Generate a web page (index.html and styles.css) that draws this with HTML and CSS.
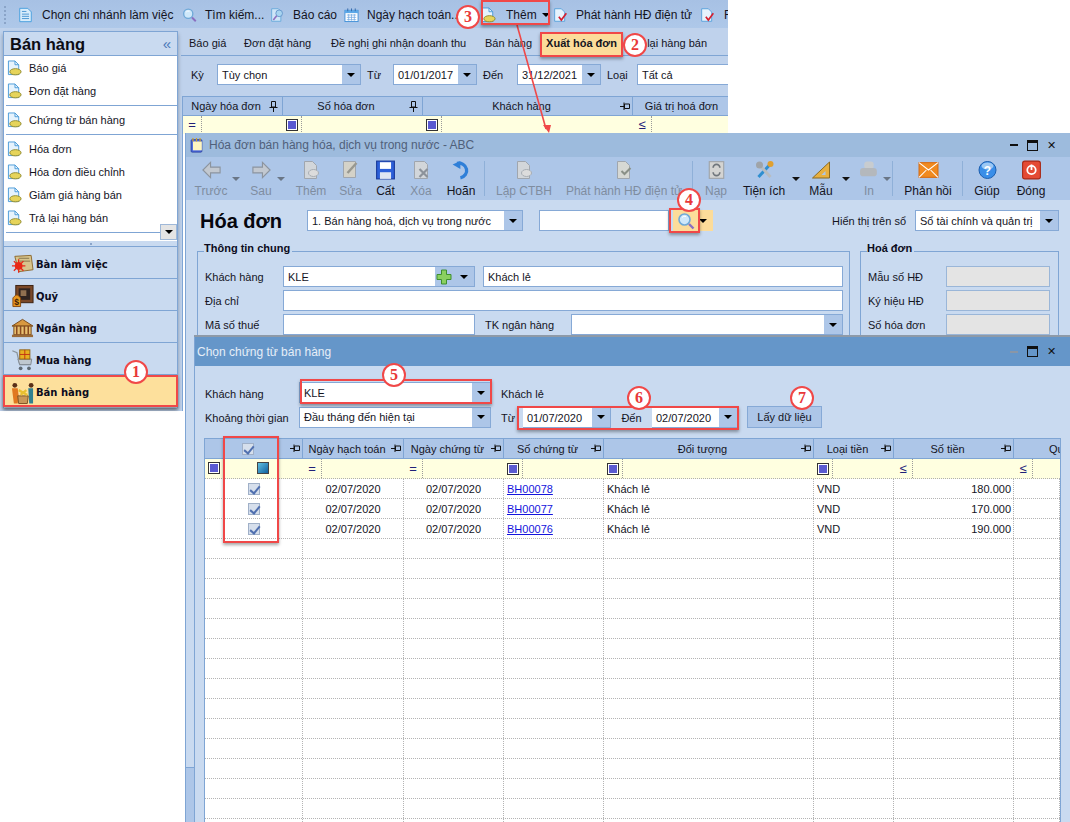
FILE: index.html
```html
<!DOCTYPE html>
<html lang="vi">
<head>
<meta charset="utf-8">
<title>Chọn chứng từ bán hàng</title>
<link rel="stylesheet" href="styles.css">
</head>
<body>
<svg class="defs" width="0" height="0" aria-hidden="true">
  <symbol id="i-list" viewBox="0 0 16 18"><path d="M1.5 1.5h9l4 4v11h-13z" fill="#d8ecfb" stroke="#3f9bdc"/><path d="M4 5h5M4 8h8M4 10.500h8M4 13h8" stroke="#3f8fd0"/></symbol>
  <symbol id="i-search" viewBox="0 0 18 18"><circle cx="7.500" cy="7.500" r="5.500" fill="#cfe8fa" stroke="#6fa9d8" stroke-width="1.600"/><path d="M5 5.500a3.500 3.500 0 0 1 4-1" stroke="#fff" fill="none"/><path d="M12 12l4.500 4.500" stroke="#8a6fc0" stroke-width="2.400"/></symbol>
  <symbol id="i-report" viewBox="0 0 18 18"><path d="M2 1.500h8l3 3v12H2z" fill="#cfe6f8" stroke="#5fa5d8"/><circle cx="11" cy="7" r="4" fill="#a8d4f0" stroke="#5f90c8"/><path d="M8 10l-4 5" stroke="#9070c0" stroke-width="2"/></symbol>
  <symbol id="i-cal" viewBox="0 0 16 16"><rect x="1" y="3" width="14" height="12" fill="#fff" stroke="#3f8fd8"/><rect x="1" y="3" width="14" height="3" fill="#5aa8e8"/><path d="M4 1v3M8 1v3M12 1v3" stroke="#3468a8"/><path d="M3 8h10M3 10.500h10M3 13h10M5 7v7M8 7v7M11 7v7" stroke="#70a8e0" stroke-width=".8"/></symbol>
  <symbol id="i-doc" viewBox="0 0 16 17"><path d="M1.500 1h7l4 4v10.500h-11z" fill="#e6f3fd" stroke="#4a9ad8"/><path d="M8.500 1v4h4" fill="none" stroke="#4a9ad8"/><ellipse cx="9" cy="12.500" rx="6" ry="3.300" fill="#e6d45a" stroke="#8f8a30"/></symbol>
  <symbol id="i-check" viewBox="0 0 18 18"><path d="M2 1.500h8l4 4v11H2z" fill="#e6f3fd" stroke="#4a9ad8"/><path d="M7 11l3 4 6-8" fill="none" stroke="#d42030" stroke-width="2"/></symbol>
  <symbol id="i-left" viewBox="0 0 22 20"><path d="M10 2L2 10l8 8v-5h10V7H10z" fill="#c2c8d0" stroke="#8c949e" stroke-width="1.200"/></symbol>
  <symbol id="i-right" viewBox="0 0 22 20"><path d="M12 2l8 8-8 8v-5H2V7h10z" fill="#c2c8d0" stroke="#8c949e" stroke-width="1.200"/></symbol>
  <symbol id="i-gdoc" viewBox="0 0 18 20"><path d="M2 1.500h8l4 4v13H2z" fill="#d2d6da" stroke="#a0a6ae"/><ellipse cx="11" cy="13" rx="5" ry="3.500" fill="#dcdcdc" stroke="#a8aeb4"/></symbol>
  <symbol id="i-gedit" viewBox="0 0 18 20"><path d="M2 1.500h12v16H2z" fill="#d4d2c8" stroke="#a0a6ae"/><path d="M6 13l9-10" stroke="#989890" stroke-width="2.400"/></symbol>
  <symbol id="i-gdel" viewBox="0 0 18 20"><path d="M2 1.500h10l3 3v14H2z" fill="#d2d6da" stroke="#a0a6ae"/><path d="M7 9l8 8M15 9l-8 8" stroke="#8c929a" stroke-width="2.200"/></symbol>
  <symbol id="i-save" viewBox="0 0 18 18"><rect x="1" y="1" width="16" height="16" fill="#2c5fd8" stroke="#1a3a9a"/><rect x="4" y="2" width="10" height="6" fill="#fff"/><rect x="4" y="11" width="10" height="6" fill="#dfe6f2"/></symbol>
  <symbol id="i-undo" viewBox="0 0 18 18"><path d="M5 3a7 6.500 0 1 1 3 13" fill="none" stroke="#2f7fd8" stroke-width="3"/><path d="M1 4l7-3v7z" fill="#2f7fd8"/></symbol>
  <symbol id="i-gchk" viewBox="0 0 18 20"><path d="M2 1.500h8l4 4v13H2z" fill="#d6d8d4" stroke="#a0a6ae"/><path d="M6 11l3 3 6-6" fill="none" stroke="#8a9088" stroke-width="2"/></symbol>
  <symbol id="i-ref" viewBox="0 0 16 18"><rect x="1.500" y="1.500" width="13" height="15" fill="#d4d4d2" stroke="#a0a4a8"/><path d="M5 7a3 3 0 0 1 6 0M11 11a3 3 0 0 1-6 0" fill="none" stroke="#70767c" stroke-width="1.500"/></symbol>
  <symbol id="i-tools" viewBox="0 0 20 20"><path d="M4 17L15 5" stroke="#2f8fd0" stroke-width="3"/><path d="M4 4l12 13" stroke="#b8bcc0" stroke-width="3"/><circle cx="5" cy="5" r="3.500" fill="#a0a4a8"/><circle cx="16" cy="4" r="3" fill="#e0a030"/></symbol>
  <symbol id="i-ruler" viewBox="0 0 20 20"><path d="M1 18L18 2v16z" fill="#e8b040" stroke="#8a6a20"/><path d="M10 15l4-4v4z" fill="#adc6e8"/></symbol>
  <symbol id="i-print" viewBox="0 0 20 18"><rect x="5" y="1" width="9" height="7" rx="3" fill="#c8cccf"/><rect x="1" y="7" width="16" height="8" rx="3" fill="#b4b8bc"/></symbol>
  <symbol id="i-mail" viewBox="0 0 20 16"><rect x="1" y="1" width="18" height="14" fill="#f08a20" stroke="#d86a10"/><path d="M1 1l9 7 9-7M1 15l7-7M19 15l-7-7" fill="none" stroke="#fff"/></symbol>
  <symbol id="i-help" viewBox="0 0 20 20"><circle cx="10" cy="10" r="8.500" fill="#3a8ee8" stroke="#1c5fb0"/><ellipse cx="10" cy="6" rx="6" ry="3.500" fill="#9cc8f4"/><text x="10" y="15" text-anchor="middle" class="qmark">?</text></symbol>
  <symbol id="i-power" viewBox="0 0 18 18"><rect x="1" y="1" width="16" height="16" rx="2" fill="#e44a34" stroke="#a82a18"/><circle cx="9" cy="9" r="3.800" fill="none" stroke="#fff" stroke-width="1.600"/><path d="M9 4v5" stroke="#fff" stroke-width="1.600"/></symbol>
  <symbol id="i-note" viewBox="0 0 16 18"><rect x="2" y="3" width="12" height="14" rx="1" fill="#4a6ae0" stroke="#2a3ea0"/><rect x="4" y="5" width="10" height="10" fill="#fff6c0"/><path d="M4 1v4M8 1v4M12 1v4" stroke="#c8a030" stroke-width="1.400"/></symbol>
  <symbol id="i-pinv" viewBox="0 0 9 11"><path d="M2.500.500h4v5.500h-4zM.500 6.500h8M4.500 6.500V11" fill="none" stroke="#111"/></symbol>
  <symbol id="i-pinh" viewBox="0 0 10 9"><path d="M4.500 2h5v4.500h-5zM4 .500v7.500M4 4.500H0" fill="none" stroke="#111"/></symbol>
  <symbol id="i-plus" viewBox="0 0 16 16"><path d="M5.500 1h5v4.500H15v5h-4.500V15h-5v-4.500H1v-5h4.500z" fill="#8ad060" stroke="#3f8f30"/></symbol>
  <symbol id="n-desk" viewBox="0 0 24 22"><path d="M4 3l17-1 2 15-15 2z" fill="#d8c48c" stroke="#8c6a30"/><path d="M8 5h11M9 8h11" stroke="#70603a" stroke-width=".8"/><circle cx="8" cy="13" r="4" fill="#e82818"/><circle cx="8" cy="13" r="1.500" fill="#f8e080"/><path d="M8 6v14M1 13h14M3 8l10 10M13 8L3 18" stroke="#e82818" stroke-width="1.400"/></symbol>
  <symbol id="n-safe" viewBox="0 0 24 24"><rect x="5" y="1" width="18" height="18" fill="#7a4828" stroke="#3a2010"/><rect x="8" y="4" width="12" height="12" fill="#302420"/><rect x="10" y="6" width="6" height="6" fill="#907050"/><path d="M2 23V14l3-3h2l3 3v9z" fill="#e89820" stroke="#8a4a10"/><text x="6" y="21" text-anchor="middle" class="dollar">$</text></symbol>
  <symbol id="n-bank" viewBox="0 0 24 20"><path d="M12 1L1 8h22z" fill="#d89840" stroke="#7a4a18"/><rect x="3" y="8" width="18" height="9" fill="#e8c070" stroke="#7a4a18"/><path d="M6 8v9M10 8v9M14 8v9M18 8v9" stroke="#8a4a20" stroke-width="1.600"/><rect x="1" y="17" width="22" height="2.500" fill="#9a6a38"/></symbol>
  <symbol id="n-cart" viewBox="0 0 24 26"><path d="M1 3l5 2 3 13h12" fill="none" stroke="#8a949c" stroke-width="1.400"/><path d="M7 12h15l-1 6H9z" fill="#c0c8d0" stroke="#808890"/><rect x="9" y="2" width="11" height="10" fill="#e8b020" stroke="#906010"/><path d="M14.500 2v10M9 7h11" stroke="#c03010"/><circle cx="10" cy="22" r="2" fill="#606a74"/><circle cx="19" cy="22" r="2" fill="#606a74"/></symbol>
  <symbol id="n-sell" viewBox="0 0 24 24"><circle cx="4" cy="4" r="2.500" fill="#5a3018"/><path d="M1 7h6l1 8-1 8H3l-1-8z" fill="#e07820"/><circle cx="21" cy="4" r="2.500" fill="#5a3018"/><path d="M18 7h5v16h-4z" fill="#308090"/><path d="M7 15h11l-1 8H8z" fill="#c89858" stroke="#7a5020"/><path d="M8 9l9 5M10 14l6-5" stroke="#e8c030" stroke-width="2.400"/></symbol>
</svg>

<main class="stage">

<section class="window app">
  <div class="app-top">
    <span class="grip"></span>
    <svg class="ic"><use href="#i-list"/></svg><span>Chọn chi nhánh làm việc</span>
    <svg class="ic"><use href="#i-search"/></svg><span>Tìm kiếm...</span>
    <svg class="ic"><use href="#i-report"/></svg><span>Báo cáo</span>
    <svg class="ic"><use href="#i-cal"/></svg><span>Ngày hạch toán...</span>
    <svg class="ic"><use href="#i-doc"/></svg><span>Thêm</span><span class="caret"></span>
    <svg class="ic"><use href="#i-check"/></svg><span>Phát hành HĐ điện tử</span>
    <svg class="ic"><use href="#i-check"/></svg><span>F</span>
  </div>
  <div class="app-body">
    <aside class="side">
      <header class="side-head"><h2>Bán hàng</h2><span class="chev">«</span></header>
      <div class="side-list">
        <div class="sgroup">
          <div class="sitem"><svg class="ic"><use href="#i-doc"/></svg>Báo giá</div>
          <div class="sitem"><svg class="ic"><use href="#i-doc"/></svg>Đơn đặt hàng</div>
        </div>
        <div class="sgroup">
          <div class="sitem"><svg class="ic"><use href="#i-doc"/></svg>Chứng từ bán hàng</div>
        </div>
        <div class="sgroup">
          <div class="sitem"><svg class="ic"><use href="#i-doc"/></svg>Hóa đơn</div>
          <div class="sitem"><svg class="ic"><use href="#i-doc"/></svg>Hóa đơn điều chỉnh</div>
          <div class="sitem"><svg class="ic"><use href="#i-doc"/></svg>Giảm giá hàng bán</div>
          <div class="sitem"><svg class="ic"><use href="#i-doc"/></svg>Trả lại hàng bán</div>
        </div>
        <div class="sitem cut"><svg class="ic"><use href="#i-doc"/></svg></div>
        <span class="side-more"><span class="caret"></span></span>
      </div>
      <div class="split"></div>
      <nav class="snav">
        <div class="nitem"><svg class="nic"><use href="#n-desk"/></svg>Bàn làm việc</div>
        <div class="nitem"><svg class="nic"><use href="#n-safe"/></svg>Quỹ</div>
        <div class="nitem"><svg class="nic"><use href="#n-bank"/></svg>Ngân hàng</div>
        <div class="nitem"><svg class="nic"><use href="#n-cart"/></svg>Mua hàng</div>
        <div class="nitem on"><svg class="nic"><use href="#n-sell"/></svg>Bán hàng</div>
      </nav>
    </aside>
    <div class="work">
      <div class="tabs">
        <span>Báo giá</span><span>Đơn đặt hàng</span><span>Đề nghị ghi nhận doanh thu</span><span>Bán hàng</span><span class="tab-on">Xuất hóa đơn</span><span class="tab-last">Trả lại hàng bán</span>
      </div>
      <div class="filter">
        <span>Kỳ</span>
        <div class="combo"><span class="val">Tùy chọn</span><span class="arrow"><span class="caret"></span></span></div>
        <span class="pl">Từ</span>
        <div class="combo"><span class="val">01/01/2017</span><span class="arrow"><span class="caret"></span></span></div>
        <span class="pl">Đến</span>
        <div class="combo"><span class="val">31/12/2021</span><span class="arrow"><span class="caret"></span></span></div>
        <span class="pl">Loại</span>
        <div class="combo"><span class="val">Tất cả</span></div>
      </div>
      <div class="oldgrid">
        <div class="ohead">
          <div class="hc"><span>Ngày hóa đơn</span><svg class="pinv"><use href="#i-pinv"/></svg></div>
          <div class="hc"><span>Số hóa đơn</span><svg class="pinv"><use href="#i-pinv"/></svg></div>
          <div class="hc"><span>Khách hàng</span><svg class="pinh"><use href="#i-pinh"/></svg></div>
          <div class="hc"><span>Giá trị hoá đơn</span></div>
        </div>
        <div class="ofilter">
          <div class="fc"><span class="op">=</span></div>
          <div class="fc"><span class="op"><span class="sq"></span></span></div>
          <div class="fc"><span class="op"><span class="sq"></span></span></div>
          <div class="fc"><span class="op">≤</span></div>
        </div>
        <div class="obody"></div>
      </div>
    </div>
  </div>
</section>

<section class="window invoice">
  <header class="inv-title">
    <svg class="ic"><use href="#i-note"/></svg>
    <span class="inv-name">Hóa đơn bán hàng hóa, dịch vụ trong nước - ABC</span>
    <span class="wctl"><span class="w-min"></span><span class="w-max"></span><span class="w-x">✕</span></span>
  </header>
  <div class="bigbar">
    <div class="bt off"><svg class="bic"><use href="#i-left"/></svg>Trước</div><span class="bc off"></span>
    <div class="bt off"><svg class="bic"><use href="#i-right"/></svg>Sau</div><span class="bc off"></span>
    <div class="bt off"><svg class="bic"><use href="#i-gdoc"/></svg>Thêm</div>
    <div class="bt off"><svg class="bic"><use href="#i-gedit"/></svg>Sửa</div>
    <div class="bt"><svg class="bic"><use href="#i-save"/></svg>Cất</div>
    <div class="bt off"><svg class="bic"><use href="#i-gdel"/></svg>Xóa</div>
    <div class="bt"><svg class="bic"><use href="#i-undo"/></svg>Hoãn</div>
    <span class="bs"></span>
    <div class="bt off"><svg class="bic"><use href="#i-gdoc"/></svg>Lập CTBH</div>
    <div class="bt off"><svg class="bic"><use href="#i-gchk"/></svg>Phát hành HĐ điện tử</div>
    <span class="bs"></span>
    <div class="bt off"><svg class="bic"><use href="#i-ref"/></svg>Nạp</div>
    <div class="bt"><svg class="bic"><use href="#i-tools"/></svg>Tiện ích</div><span class="bc"></span>
    <div class="bt"><svg class="bic"><use href="#i-ruler"/></svg>Mẫu</div><span class="bc"></span>
    <div class="bt off"><svg class="bic"><use href="#i-print"/></svg>In</div><span class="bc off"></span>
    <span class="bs"></span>
    <div class="bt"><svg class="bic"><use href="#i-mail"/></svg>Phản hồi</div>
    <span class="bs"></span>
    <div class="bt"><svg class="bic"><use href="#i-help"/></svg>Giúp</div>
    <div class="bt"><svg class="bic"><use href="#i-power"/></svg>Đóng</div>
  </div>
  <div class="inv-body">
    <div class="inv-row">
      <h1>Hóa đơn</h1>
      <div class="combo"><span class="val">1. Bán hàng hoá, dịch vụ trong nước</span><span class="arrow"><span class="caret"></span></span></div>
      <div class="input"></div>
      <div class="findbtn"><svg class="ic"><use href="#i-search"/></svg><span class="caret"></span></div>
      <span class="ledger">Hiển thị trên sổ</span>
      <div class="combo"><span class="val">Sổ tài chính và quản trị</span><span class="arrow"><span class="caret"></span></span></div>
    </div>
    <div class="groups">
      <fieldset class="gen">
        <legend>Thông tin chung</legend>
        <div class="gen-grid">
          <label>Khách hàng</label>
          <div class="combo"><span class="val">KLE</span><span class="arrow wide"><svg class="plus"><use href="#i-plus"/></svg><span class="caret"></span></span></div>
          <div class="input span2">Khách lẻ</div>
          <label>Địa chỉ</label>
          <div class="input span3"></div>
          <label>Mã số thuế</label>
          <div class="input"></div>
          <label class="lb2">TK ngân hàng</label>
          <div class="combo"><span class="val"></span><span class="arrow"><span class="caret"></span></span></div>
        </div>
      </fieldset>
      <fieldset class="inv">
        <legend>Hoá đơn</legend>
        <div class="inv-grid">
          <label>Mẫu số HĐ</label><div class="ro"></div>
          <label>Ký hiệu HĐ</label><div class="ro"></div>
          <label>Số hóa đơn</label><div class="ro"></div>
        </div>
      </fieldset>
    </div>
    <div class="inv-foot"></div>
  </div>
</section>

<section class="window picker">
  <header class="pick-title">
    <span>Chọn chứng từ bán hàng</span>
    <span class="wctl"><span class="w-min dim"></span><span class="w-max"></span><span class="w-x">✕</span></span>
  </header>
  <div class="pick-form">
    <label>Khách hàng</label>
    <div class="combo"><span class="val">KLE</span><span class="arrow"><span class="caret"></span></span></div>
    <span class="r1-name">Khách lẻ</span>
    <label>Khoảng thời gian</label>
    <div class="combo"><span class="val">Đầu tháng đến hiện tại</span><span class="arrow"><span class="caret"></span></span></div>
    <span class="tu">Từ</span>
    <div class="combo date"><span class="val">01/07/2020</span><span class="arrow"><span class="caret"></span></span></div>
    <span class="den">Đến</span>
    <div class="combo date"><span class="val">02/07/2020</span><span class="arrow"><span class="caret"></span></span></div>
    <span class="btn">Lấy dữ liệu</span>
  </div>
  <div class="grid">
    <div class="g g-head">
      <div class="hc"><span><span class="cb"></span></span><svg class="pinh"><use href="#i-pinh"/></svg></div>
      <div class="hc"><span>Ngày hạch toán</span><svg class="pinh"><use href="#i-pinh"/></svg></div>
      <div class="hc"><span>Ngày chứng từ</span><svg class="pinh"><use href="#i-pinh"/></svg></div>
      <div class="hc"><span>Số chứng từ</span><svg class="pinh"><use href="#i-pinh"/></svg></div>
      <div class="hc"><span>Đối tượng</span><svg class="pinh"><use href="#i-pinh"/></svg></div>
      <div class="hc"><span>Loại tiền</span><svg class="pinh"><use href="#i-pinh"/></svg></div>
      <div class="hc"><span>Số tiền</span><svg class="pinh"><use href="#i-pinh"/></svg></div>
      <div class="hc"><span>Quy</span></div>
    </div>
    <div class="g g-filter">
      <div class="fc first"><span class="sq"></span><span class="gsq"></span></div>
      <div class="fc"><span class="op">=</span></div>
      <div class="fc"><span class="op">=</span></div>
      <div class="fc"><span class="op"><span class="sq"></span></span></div>
      <div class="fc"><span class="op"><span class="sq"></span></span></div>
      <div class="fc"><span class="op"><span class="sq"></span></span></div>
      <div class="fc"><span class="op">≤</span></div>
      <div class="fc"><span class="op">≤</span></div>
    </div>
    <div class="g g-row"><div class="c ctr"><span class="cb"></span></div><div class="c ctr">02/07/2020</div><div class="c ctr">02/07/2020</div><div class="c"><a href="#">BH00078</a></div><div class="c">Khách lẻ</div><div class="c">VND</div><div class="c num">180.000</div><div class="c"></div></div>
    <div class="g g-row"><div class="c ctr"><span class="cb"></span></div><div class="c ctr">02/07/2020</div><div class="c ctr">02/07/2020</div><div class="c"><a href="#">BH00077</a></div><div class="c">Khách lẻ</div><div class="c">VND</div><div class="c num">170.000</div><div class="c"></div></div>
    <div class="g g-row"><div class="c ctr"><span class="cb"></span></div><div class="c ctr">02/07/2020</div><div class="c ctr">02/07/2020</div><div class="c"><a href="#">BH00076</a></div><div class="c">Khách lẻ</div><div class="c">VND</div><div class="c num">190.000</div><div class="c"></div></div>
    <div class="g g-row"><i></i><i></i><i></i><i></i><i></i><i></i><i></i><i></i></div>
    <div class="g g-row"><i></i><i></i><i></i><i></i><i></i><i></i><i></i><i></i></div>
    <div class="g g-row"><i></i><i></i><i></i><i></i><i></i><i></i><i></i><i></i></div>
    <div class="g g-row"><i></i><i></i><i></i><i></i><i></i><i></i><i></i><i></i></div>
    <div class="g g-row"><i></i><i></i><i></i><i></i><i></i><i></i><i></i><i></i></div>
    <div class="g g-row"><i></i><i></i><i></i><i></i><i></i><i></i><i></i><i></i></div>
    <div class="g g-row"><i></i><i></i><i></i><i></i><i></i><i></i><i></i><i></i></div>
    <div class="g g-row"><i></i><i></i><i></i><i></i><i></i><i></i><i></i><i></i></div>
    <div class="g g-row"><i></i><i></i><i></i><i></i><i></i><i></i><i></i><i></i></div>
    <div class="g g-row"><i></i><i></i><i></i><i></i><i></i><i></i><i></i><i></i></div>
    <div class="g g-row"><i></i><i></i><i></i><i></i><i></i><i></i><i></i><i></i></div>
    <div class="g g-row"><i></i><i></i><i></i><i></i><i></i><i></i><i></i><i></i></div>
    <div class="g g-row"><i></i><i></i><i></i><i></i><i></i><i></i><i></i><i></i></div>
    <div class="g g-row"><i></i><i></i><i></i><i></i><i></i><i></i><i></i><i></i></div>
    <div class="g g-row"><i></i><i></i><i></i><i></i><i></i><i></i><i></i><i></i></div>
  </div>
</section>

<!-- annotations over the montage -->
<svg class="arrowline" viewBox="0 0 1070 822" aria-hidden="true">
  <path d="M517 25L546 129" stroke="#f04848" stroke-width="1.600"/>
  <path d="M543 125l8 0-2 8z" fill="#f04848"/>
</svg>
<div class="rbox b-them"></div>
<div class="rbox b-tab"></div>
<div class="rbox b-nav"></div>
<div class="rbox b-find"></div>
<div class="rbox b-cust"></div>
<div class="rbox b-date"></div>
<div class="rbox b-chk"></div>
<span class="num-c c1">1</span>
<span class="num-c c2">2</span>
<span class="num-c c3">3</span>
<span class="num-c c4">4</span>
<span class="num-c c5">5</span>
<span class="num-c c6">6</span>
<span class="num-c c7">7</span>

</main>
</body>
</html>
```
FILE: styles.css
```css
* { box-sizing: border-box; }
html, body { margin: 0; padding: 0; background: #fff; }
body { font: 11px/14px "Liberation Sans", Arial, sans-serif; color: #14141e; }
.defs { position: absolute; }
.stage { position: relative; width: 1070px; height: 822px; overflow: hidden; background: #fff; }
.window { position: absolute; overflow: hidden; }
.qmark { font: bold 12px "Liberation Sans", sans-serif; fill: #fff; }
.dollar { font: bold 9px "Liberation Sans", sans-serif; fill: #402008; }

.ic { width: 15px; height: 16px; display: block; flex: none; }
.caret { display: inline-block; width: 0; height: 0; border: 4px solid transparent; border-top: 4px solid #000; border-bottom: 0; }

/* shared inputs */
.combo, .input { display: flex; height: 21px; background: #fff; border: 1px solid #86a9d6; align-items: center; min-width: 0; }
.combo .val { flex: 1; padding-left: 4px; white-space: nowrap; overflow: hidden; }
.arrow { flex: none; width: 18px; align-self: stretch; background: #adc6e8; display: flex; align-items: center; justify-content: center; }
.input { padding-left: 4px; }

/* main application */
.app { left: 0; top: 0; width: 728px; height: 411px; background: #bfd2ec; }
.app-top { height: 28px; padding-top: 2px; font-size: 12px; display: grid; grid-template-columns: 18px 24px 140px 23px 65px 23px 51px 23px 114px 25px 35px 12px 23px 124px 24px 20px; align-items: center; background: linear-gradient(#a7c1e4, #aec8e9); white-space: nowrap; }
.grip { height: 18px; margin-left: 4px; width: 2px; border-left: 2px dotted #8aa4c8; }
.app-top .caret { margin-left: 1px; }
.app-body { display: flex; height: 383px; padding: 3px 0 0 3px; }
.side { width: 175px; flex: none; display: flex; flex-direction: column; background: #c9daf0; border: 1px solid #7fa5d4; border-bottom: 0; height: 377px; box-shadow: 0 3px 4px rgba(0,0,0,.3); }
.side-head { height: 24px; display: flex; align-items: center; justify-content: space-between; padding: 1px 6px 0 6px; border-bottom: 1px solid #7fa5d4; flex: none; }
.side-head h2 { margin: 0; font: bold 16.5px/20px "Liberation Sans", sans-serif; color: #0c0c14; }
.chev { font: 15px/14px "Liberation Sans", sans-serif; color: #4a78b8; }
.side-list { position: relative; height: 185px; background: #fff; overflow: hidden; flex: none; }
.sgroup { margin-left: 2px; padding: 0 0 3px; border-bottom: 1px solid #7fa5d4; }
.sgroup + .sgroup { padding-top: 2px; }
.sitem { height: 23px; display: flex; align-items: center; gap: 7px; padding-left: 1px; }
.sitem.cut { margin-left: 2px; padding-top: 15px; }
.side-more { position: absolute; right: 0; bottom: 1px; width: 17px; height: 16px; background: #e4e4e4; border: 1px solid #9fb8d8; display: flex; align-items: center; justify-content: center; }
.split { height: 6px; flex: none; border-bottom: 1px solid #7fa5d4; background: radial-gradient(circle, #8aa4c8 .7px, transparent 1px) center / 4px 4px no-repeat; }
.snav { display: flex; flex-direction: column; }
.nitem { height: 32px; display: flex; align-items: center; gap: 2px; padding: 3px 0 0 7px; border-bottom: 1px solid #7fa5d4; font: bold 10px "DejaVu Sans", sans-serif; color: #0c0c20; }
.nitem:last-child { border-bottom: 0; }
.nitem.on { background: #fde09c; }
.nic { width: 23px; height: 24px; flex: none; display: block; }

.work { flex: 1; min-width: 0; padding-left: 3px; display: flex; flex-direction: column; }
.tabs { height: 25px; display: grid; grid-template-columns: 55px 87px 154px 56px 81px 100px; align-items: center; padding-left: 8px; border-bottom: 1px solid #7fa5d4; white-space: nowrap; flex: none; }
.tab-on { font-weight: bold; height: 23px; line-height: 22px; text-align: center; background: #fcdc9a; }
.tab-last { padding-left: 6px; }
.filter { display: grid; grid-template-columns: 26px 144px 32px 84px 40px 84px 36px 110px; align-items: center; align-content: start; padding: 8px 0 0 10px; height: 40px; flex: none; white-space: nowrap; }
.pl { padding-left: 6px; }
.oldgrid { margin-left: 1px; width: 560px; flex: none; border-left: 1px solid #7fa5d4; }
.ohead, .ofilter { display: grid; grid-template-columns: 100px 140px 210px 100px; }
.ohead { height: 20px; background: #adc6e8; border-top: 1px solid #7fa5d4; border-bottom: 1px solid #7fa5d4; }
.ofilter { height: 18px; background: #ffffe0; }
.obody { height: 280px; background: #fff; }
.hc { display: flex; align-items: center; border-right: 1px solid #7fa5d4; padding-right: 2px; min-width: 0; overflow: hidden; white-space: nowrap; }
.hc > span { flex: 1; text-align: center; }
.pinv { width: 9px; height: 11px; flex: none; margin-right: 2px; }
.pinh { width: 10px; height: 9px; flex: none; }
.fc { display: flex; align-items: stretch; min-width: 0; }
.op { width: 19px; flex: none; display: flex; align-items: center; justify-content: center; border-right: 1px dotted #9a9a9a; font: 13px/14px "Liberation Sans", sans-serif; color: #202078; }
.sq { display: block; width: 12px; height: 12px; border: 1px solid #333; background: #fff; box-shadow: inset 0 0 0 1px #fff, inset 0 0 0 6px #5a5ad0; }

/* invoice window */
.invoice { left: 185px; top: 133px; width: 885px; height: 689px; background: #c9daf0; border-left: 1px solid #7fa5d4; display: flex; flex-direction: column; }
.inv-title { height: 24px; flex: none; display: flex; align-items: center; padding-left: 3px; background: #9dbbdd; color: #50607a; font-size: 12px; }
.inv-name { flex: 1; padding-left: 5px; }
.wctl { display: flex; align-items: center; width: 54px; flex: none; margin-right: 6px; gap: 9px; }
.w-min { width: 8px; height: 2px; background: #101010; flex: none; }
.w-min.dim { background: #8a96a6; }
.w-max { width: 11px; height: 11px; border: 1px solid #101010; border-top-width: 3px; flex: none; }
.w-x { font: bold 11px/11px "DejaVu Sans", sans-serif; color: #101010; flex: none; }
.bigbar { height: 43px; flex: none; font-size: 12px; background: #adc6e8; display: grid; align-items: stretch; padding-left: 4px;
  grid-template-columns: 42px 13px 32px 13px 42px 37px 33px 38px 42px 8px 68px 132px 6px 40px 56px 8px 42px 13px 28px 7px 6px 64px 4px 46px 42px; }
.bt { display: flex; flex-direction: column; align-items: center; justify-content: flex-end; padding-bottom: 2px; white-space: nowrap; gap: 4px; color: #14141e; }
.bt.off { color: #7f8da0; }
.bic { width: 21px; height: 20px; display: block; flex: none; }
.bc { display: block; height: 4px; margin-top: 20px; }
.bc::before { content: ""; display: block; width: 0; height: 0; border: 4px solid transparent; border-top: 4px solid #111; border-bottom: 0; }
.bc.off::before { border-top-color: #6a7686; }
.bs { display: block; width: 1px; margin: 4px 0 4px 2px; background: #8fb0d8; }
.inv-body { flex: 1; min-height: 0; display: flex; flex-direction: column; padding-top: 10px; position: relative; }
.inv-row { height: 21px; flex: none; display: grid; grid-template-columns: 107px 216px 16px 130px 44px 202px 144px; padding-left: 14px; align-items: center; }
.inv-row h1 { margin: 0; align-self: start; font: bold 20px/23px "Liberation Sans", sans-serif; height: 21px; color: #06060e; white-space: nowrap; }
.inv-row .input { grid-column: 4; }
.findbtn { height: 21px; display: flex; align-items: center; justify-content: space-between; padding: 0 6px 0 8px; background: linear-gradient(90deg, #c9daf0 4px, #fcdc9a 4px); }
.findbtn .ic { width: 18px; height: 18px; }
.ledger { text-align: right; padding-right: 9px; white-space: nowrap; }
.groups { display: flex; gap: 10px; margin: 10px 0 0 11px; flex: none; }
fieldset { margin: 0; padding: 5px 7px 0 7px; border: 1px solid #7fa5d4; height: 110px; min-width: 0; }
legend { padding: 0 2px 6px 0; margin-left: -1px; font-weight: bold; line-height: 14px; color: #0c0c20; }
.gen { width: 653px; }
.inv { width: 199px; }
.gen-grid { display: grid; grid-template-columns: 78px 192px 10px 86px 272px; row-gap: 3px; align-items: center; }
.gen-grid .input.span2 { grid-column: 4 / 6; margin-left: -2px; }
.gen-grid .input.span3 { grid-column: 2 / 6; }
.gen-grid .lb2 { grid-column: 4; white-space: nowrap; }
.arrow.wide { width: 39px; gap: 8px; justify-content: flex-start; padding-left: 1px; }
.plus { width: 16px; height: 16px; flex: none; }
.inv-grid { display: grid; grid-template-columns: 78px 104px; row-gap: 3px; align-items: center; }
.ro { height: 21px; background: #e4e4e4; border: 1px solid #9ab6d8; }
.inv-foot { position: absolute; left: 0; right: 0; bottom: 0; height: 55px; background: #adc6e8; border-top: 1px solid #7fa5d4; }

/* picker window */
.picker { left: 194px; top: 337px; width: 876px; height: 485px; background: #c9daf0; border-left: 1px solid #7fa5d4; box-shadow: 0 -2px 0 #8e9aa8; overflow: hidden; }
.pick-title { height: 29px; display: flex; align-items: center; justify-content: space-between; padding-left: 2px; background: #6596c9; color: #e6eef8; font-size: 12px; }
.pick-form { display: grid; grid-template-columns: 94px 192px 10px 22px 88px 41px 86px 9px 75px; row-gap: 3px; padding: 16px 0 0 10px; align-items: center; white-space: nowrap; height: 62px; }
.pick-form label, .r1-name, .tu, .den { padding-top: 2px; }
.r1-name { grid-column: 4 / -1; }
.tu { grid-column: 4; }
.den { text-align: center; }
.pick-form .date { border-left: 0; }
.date .val { padding: 2px 0 0 4px; }
.btn { grid-column: 9; height: 22px; line-height: 20px; text-align: center; background: #adc6e8; border: 1px solid #86a9d6; }
.grid { margin: 10px 0 0 9px; width: 857px; border-left: 1px solid #7fa5d4; border-right: 1px solid #7fa5d4; border-top: 1px solid #7fa5d4; background: #fff; }
.g { display: grid; grid-template-columns: 98px 101px 100px 100px 210px 80px 120px 46px; }
.g-head { height: 20px; background: #adc6e8; border-bottom: 1px solid #7fa5d4; }
.g-head .hc:last-child { border-right: 0; padding: 0; }
.g-head .hc:last-child span { text-align: left; padding-left: 35px; white-space: nowrap; }
.g-filter { height: 20px; background: #ffffe0; border-bottom: 1px dotted #b0b0b0; }
.fc.first { display: block; position: relative; }
.fc.first .sq { position: absolute; left: 3px; top: 3px; }
.gsq { position: absolute; left: 52px; top: 3px; width: 12px; height: 12px; border: 1px solid #444; background: linear-gradient(135deg, #60c0e0, #1060a0); }
.g-row { height: 20px; border-bottom: 1px dotted #b4b4b4; }
.g-row > * { border-right: 1px dotted #b4b4b4; display: block; }
.c { line-height: 20px; padding: 0 3px; overflow: hidden; white-space: nowrap; }
.c.ctr { text-align: center; }
.c.num { text-align: right; padding-right: 2px; }
.c a { color: #1414dc; }
.cb { display: inline-block; width: 12px; height: 12px; vertical-align: -2px; border: 1px solid #a0b0c8; background: #d6dfec; position: relative; }
.cb::after { content: ""; position: absolute; left: 3px; top: 0; width: 4px; height: 8px; border: solid #5070b0; border-width: 0 2px 2px 0; transform: rotate(40deg); }

/* annotations */
.arrowline { position: absolute; left: 0; top: 0; width: 1070px; height: 822px; pointer-events: none; }
.rbox { position: absolute; border: 2px solid #f04848; box-shadow: 0 2px 3px rgba(0,0,0,.35); }
.b-them { left: 481px; top: 0; width: 69px; height: 25px; }
.b-tab { left: 540px; top: 32px; width: 83px; height: 25px; }
.b-nav { left: 3px; top: 375px; width: 175px; height: 32px; }
.b-find { left: 669px; top: 208px; width: 31px; height: 25px; }
.b-cust { left: 300px; top: 379px; width: 192px; height: 25px; }
.b-date { left: 517px; top: 406px; width: 222px; height: 24px; }
.b-chk { left: 223px; top: 436px; width: 56px; height: 107px; }
.num-c { position: absolute; width: 24px; height: 24px; margin: -12px 0 0 -12px; border-radius: 50%; background: #fff; border: 2px solid #f04848; font: bold 16px/20px "Liberation Serif", serif; color: #e83838; text-align: center; }
.c1 { left: 136px; top: 372px; }
.c2 { left: 635px; top: 45px; }
.c3 { left: 468px; top: 17px; }
.c4 { left: 689px; top: 200px; }
.c5 { left: 394px; top: 375px; }
.c6 { left: 639px; top: 398px; }
.c7 { left: 802px; top: 398px; }
```
